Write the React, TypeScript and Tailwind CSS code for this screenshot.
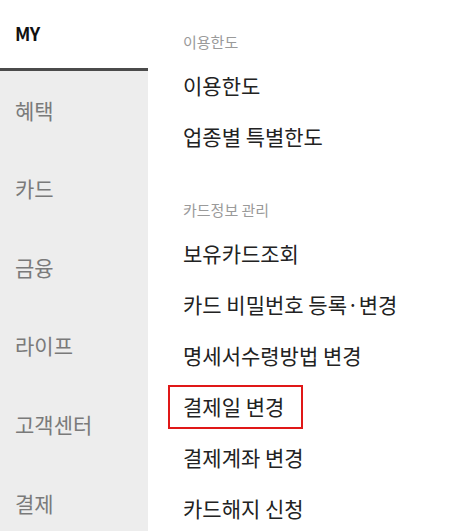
const sideMenu = ["혜택", "카드", "금융", "라이프", "고객센터", "결제"];

const groups = [
  { title: "이용한도", items: ["이용한도", "업종별 특별한도"] },
  {
    title: "카드정보 관리",
    items: [
      "보유카드조회",
      "카드 비밀번호 등록·변경",
      "명세서수령방법 변경",
      "결제일 변경",
      "결제계좌 변경",
      "카드해지 신청",
    ],
  },
];

const highlighted = "결제일 변경";

export default function App() {
  return (
    <div
      className="flex w-[462px] h-[531px] overflow-hidden bg-white"
      style={{ fontFamily: '"Noto Sans CJK KR", "Noto Sans", sans-serif' }}
    >
      {/* Left category rail */}
      <aside className="w-[148px] shrink-0 flex flex-col">
        <div className="h-[71px] shrink-0 flex items-center pl-[15px] pb-[2px] border-b-[3px] border-[#4b4b4b] bg-white">
          <span className="text-[18px] font-semibold text-[#111] tracking-[-0.5px]">MY</span>
        </div>
        <ul className="flex-1 bg-[#ededed]">
          {sideMenu.map((label) => (
            <li key={label} className="h-[78.6px] flex items-center pl-[15px] text-[21px] text-[#7a7a7a]">
              {label}
            </li>
          ))}
        </ul>
      </aside>

      {/* Sub menu */}
      <main className="flex-1 ml-[20px] pt-[32px] flex flex-col">
        {groups.map((group, gi) => (
          <section key={group.title} className={gi > 0 ? "mt-[41px]" : ""}>
            <h3 className="h-[20px] leading-[20px] px-[15px] mb-[12px] text-[15px] text-[#9a9a9a]">
              {group.title}
            </h3>
            <ul className="flex flex-col gap-[7px]">
              {group.items.map((item) => (
                <li
                  key={item}
                  className={
                    "w-[135px] h-[44px] flex items-center px-[13px] border-2 whitespace-nowrap text-[21px] text-[#222] " +
                    (item === highlighted ? "border-[#e01818]" : "border-transparent")
                  }
                >
                  {item}
                </li>
              ))}
            </ul>
          </section>
        ))}
      </main>
    </div>
  );
}
